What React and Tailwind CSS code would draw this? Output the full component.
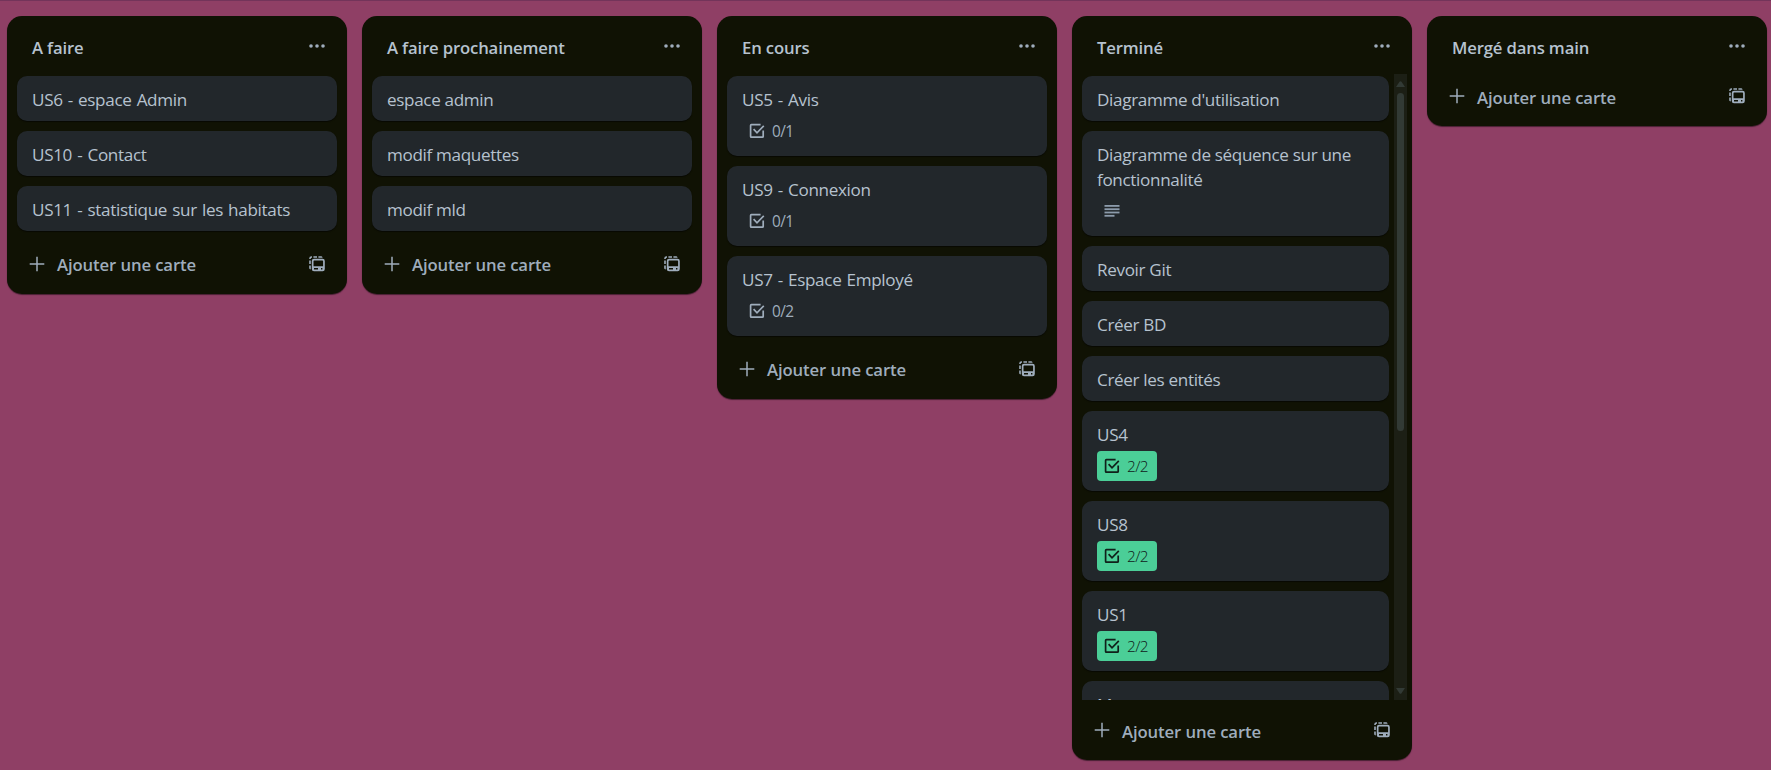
const lists = [
  { title: "A faire", cards: [{ t: "US6 - espace Admin" }, { t: "US10 - Contact" }, { t: "US11 - statistique sur les habitats" }] },
  { title: "A faire prochainement", cards: [{ t: "espace admin" }, { t: "modif maquettes" }, { t: "modif mld" }] },
  { title: "En cours", cards: [{ t: "US5 - Avis", check: "0/1" }, { t: "US9 - Connexion", check: "0/1" }, { t: "US7 - Espace Employé", check: "0/2" }] },
  {
    title: "Terminé",
    scroll: true,
    cards: [
      { t: "Diagramme d'utilisation" },
      { t: "Diagramme de séquence sur une fonctionnalité", desc: true },
      { t: "Revoir Git" },
      { t: "Créer BD" },
      { t: "Créer les entités" },
      { t: "US4", check: "2/2", done: true },
      { t: "US8", check: "2/2", done: true },
      { t: "US1", check: "2/2", done: true },
      { t: "Maquettes" },
    ],
  },
  { title: "Mergé dans main", cards: [] },
];

function CheckIcon() {
  return (
    <svg width="20" height="20" viewBox="0 0 20 20" fill="none" stroke="currentColor" strokeWidth="1.7">
      <path d="M13.6 3.6H4.4Q3.6 3.6 3.6 4.4V15.4Q3.6 16.2 4.4 16.2H15.4Q16.2 16.2 16.2 15.4V9.4" />
      <path d="M6.6 8.2L10 11.8L16.8 4.8" />
    </svg>
  );
}

function DescIcon() {
  return (
    <svg width="20" height="20" viewBox="0 0 20 20" fill="currentColor">
      <rect x="2.5" y="4" width="15" height="1.8" />
      <rect x="2.5" y="7.3" width="15" height="1.8" />
      <rect x="2.5" y="10.6" width="15" height="1.8" />
      <rect x="2.5" y="13.9" width="10" height="1.8" />
    </svg>
  );
}

function DotsIcon() {
  return (
    <svg width="20" height="20" viewBox="0 0 20 20" fill="currentColor">
      <circle cx="4" cy="10" r="1.8" />
      <circle cx="10" cy="10" r="1.8" />
      <circle cx="16" cy="10" r="1.8" />
    </svg>
  );
}

function PlusIcon() {
  return (
    <svg width="20" height="20" viewBox="0 0 20 20" stroke="currentColor" strokeWidth="1.5">
      <path d="M10 2.7V17.3M2.7 10H17.3" />
    </svg>
  );
}

function TemplateIcon() {
  return (
    <svg width="20" height="20" viewBox="0 0 20 20" fill="currentColor">
      <path d="M2.2 4.6Q2.2 2.2 4.6 2.2H5V3.8H4.6Q3.8 3.8 3.8 4.6V5H2.2ZM6.4 2.2H10V3.8H6.4ZM11.4 2.2H14.4Q15.4 2.2 15.6 3.8H11.4ZM2.2 6.4H3.8V10H2.2ZM2.2 11.4H3.8V15.6Q2.2 15.2 2.2 14.2Z" />
      <path
        fillRule="evenodd"
        d="M7 4.8H15.6Q17.8 4.8 17.8 7V15Q17.8 17.3 15.6 17.3H7Q4.8 17.3 4.8 15V7Q4.8 4.8 7 4.8ZM7.2 6.5Q6.5 6.5 6.5 7.2V12.2H16.1V7.2Q16.1 6.5 15.4 6.5ZM7 14.1V15.5H11V14.1ZM14 14.1V15.5H15.4V14.1Z"
      />
    </svg>
  );
}

function Card({ card }) {
  return (
    <li className="shrink-0 rounded-[10px] bg-[#22272b] px-[15px] pt-[11px] pb-[10px] text-[#b6c2cf] shadow-[0_1px_1px_#00000080]">
      <div
        className={
          card.t.startsWith("US")
            ? "-mb-px text-[17.1px] leading-[25px] tracking-[-0.33px] [word-spacing:1px]"
            : "-mb-px text-[17.1px] leading-[25px] tracking-[-0.34px]"
        }
      >
        {card.t}
      </div>
      {card.check && (
        <div
          className={
            card.done
              ? "mt-[5px] flex h-[30px] w-[60px] items-center rounded-[4px] bg-[#4bce97] pl-[5px] font-light text-[#10201a]"
              : "mt-[5px] flex h-[30px] w-[60px] items-center pl-[5px] text-[#9fadbc]"
          }
        >
          <CheckIcon />
          <span className="ml-[5px] pt-px text-[15.4px] leading-5 tracking-[-0.6px]">{card.check}</span>
        </div>
      )}
      {card.desc && (
        <div className="mt-[5px] flex h-[30px] items-center pl-[5px] text-[#8c9bab]">
          <DescIcon />
        </div>
      )}
    </li>
  );
}

function Scrollbar() {
  return (
    <div className="ml-[5px] flex w-[13px] shrink-0 flex-col items-center bg-[#1c1f15] pt-[7px] pb-[6px] text-[#323a35]">
      <svg width="9" height="6" viewBox="0 0 9 6" fill="currentColor"><path d="M0 6L3.5 .8Q4.5 -.4 5.5 .8L9 6Z" /></svg>
      <div className="mt-[6px] h-[338px] w-[7px] rounded-[4px] bg-[#323a35]" />
      <svg className="mt-auto" width="9" height="6" viewBox="0 0 9 6" fill="currentColor"><path d="M0 0L3.5 5.2Q4.5 6.4 5.5 5.2L9 0Z" /></svg>
    </div>
  );
}

function List({ list }) {
  const lowLabel = list.scroll || list.cards.length === 0;
  return (
    <section className="flex max-h-[744px] w-[340px] shrink-0 flex-col rounded-[15px] bg-[#101204] shadow-[0_1px_1px_#00000080]">
      <header className="flex h-[50px] shrink-0 items-start justify-between pt-5 pr-5 pl-[25px]">
        <h2 className="-mt-px text-[16.7px] leading-[25px] font-semibold tracking-[-0.15px] text-[#b6c2cf]">{list.title}</h2>
        <span className="text-[#9fadbc]"><DotsIcon /></span>
      </header>
      {list.cards.length > 0 && (
        <div className="mt-2 flex min-h-0 flex-1">
          <ol className={list.scroll ? "ml-[10px] flex w-[307px] flex-col gap-[10px] overflow-hidden pt-[2px]" : "mx-[10px] flex flex-1 flex-col gap-[10px] pt-[2px] pb-[3px]"}>
            {list.cards.map((c) => <Card key={c.t} card={c} />)}
          </ol>
          {list.scroll && <Scrollbar />}
        </div>
      )}
      <footer className="flex h-[60px] shrink-0 items-start justify-between pt-5 pr-5 pl-5 text-[#9fadbc]">
        <button className="flex items-start">
          <PlusIcon />
          <span className={`${lowLabel ? "-mt-px" : "-mt-[2px]"} ml-[10px] text-[16.7px] leading-[25px] font-semibold tracking-[-0.1px]`}>Ajouter une carte</span>
        </button>
        <TemplateIcon />
      </footer>
    </section>
  );
}

export default function App() {
  return (
    <main className="h-[770px] w-full overflow-hidden border-t border-[#73345a] bg-[#8f3f65] font-['Open_Sans','Noto_Sans',sans-serif]">
      <div className="flex items-start gap-[15px] pt-[15px] pl-[7px]">
        {lists.map((l) => <List key={l.title} list={l} />)}
      </div>
    </main>
  );
}
